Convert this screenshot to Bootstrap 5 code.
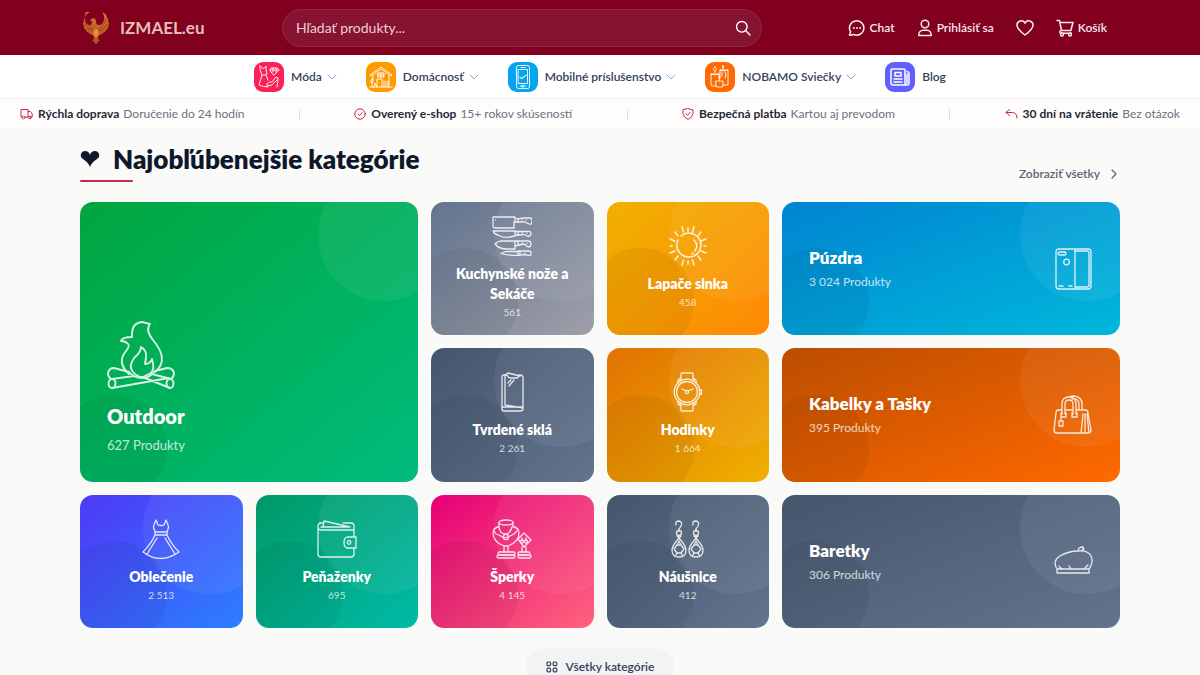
<!DOCTYPE html>
<html lang="sk">
<head>
<meta charset="utf-8">
<meta name="viewport" content="width=device-width, initial-scale=1">
<title>IZMAEL.eu</title>
<link href="https://cdn.jsdelivr.net/npm/bootstrap@5.3.0/dist/css/bootstrap.min.css" rel="stylesheet">
<style>
  body { font-family: Lato, "Liberation Sans", sans-serif; background: #fafaf9; color: #0f172a; font-size: 12px; }
  a { text-decoration: none; color: inherit; }
  svg { flex-shrink: 0; fill: none; stroke: currentColor; stroke-linecap: round; stroke-linejoin: round; }
  .shell { max-width: 1040px; margin-inline: auto; }

  .topbar { background: #80001e; color: #f8e9ed; min-height: 55px; }
  .brand { flex: 0 0 202px; padding-left: 2px; gap: 10px; font-size: 17px; font-weight: 700; color: #e6bfb3; }
  .brand svg { stroke: none; }
  .search-box { flex: 0 1 480px; height: 38px; border: 1px solid #94293f; border-radius: 19px; background: #861331; padding: 0 10px 0 13px; }
  .search-box input { background: none; border: 0; outline: 0; color: #f5dfe5; font-size: 14px; min-width: 0; padding: 0; }
  .search-box input::placeholder { color: #eccfd7; opacity: 1; }
  .search-box button { background: none; border: 0; padding: 0; color: #fff; display: flex; }
  .actions { gap: 22px; padding-right: 13px; font-weight: 600; }
  .actions a { gap: 4px; }

  .menu { background: #fff; border-bottom: 1px solid #eceef1; min-height: 44px; gap: 29px; color: #334155; font-weight: 600; }
  .menu a { gap: 7px; }
  .tile { width: 30px; height: 30px; border-radius: 9px; color: #fff; }
  .chev { color: #94a3b8; margin-left: -2px; }

  .trust { background: #fffdfb; border-bottom: 1px solid #f3f3f3; min-height: 31px; padding: 0 20px; color: #6b7280; }
  .trust b { color: #1f2937; margin-left: 1px; }
  .trust svg { color: #c62a4c; }
  .rule { width: 1px; height: 11px; background: #dcdee2; }

  .title-row { padding-top: 13px; }
  .title-row h2 { font-size: 26px; line-height: 32px; font-weight: 800; padding-bottom: 7px; margin: 0 0 20px; position: relative; gap: 13px; }
  .title-row h2::after { content: ""; position: absolute; left: 0; bottom: 0; width: 53px; height: 2px; border-radius: 1px; background: #c62a4c; }
  .all-link { color: #5b6472; font-weight: 600; gap: 8px; padding-top: 3px; }

  .tiles { display: grid; grid-template-columns: repeat(6, 1fr); grid-auto-rows: 1fr; gap: 13px; min-height: 426px; }
  .cat { position: relative; overflow: hidden; border-radius: 13px; color: #fff; display: flex; flex-direction: column; align-items: center; justify-content: center; text-align: center; padding: 13px; background: linear-gradient(to bottom right, var(--from), var(--to)); }
  .cat::before, .cat::after { content: ""; position: absolute; border-radius: 50%; }
  .cat::before { width: 133px; height: 133px; top: -34px; right: -33px; background: #fff; opacity: .06; }
  .cat::after { width: 107px; height: 107px; left: -20px; bottom: -20px; background: #000; opacity: .05; }
  .cat > * { position: relative; z-index: 1; }
  .cat svg { opacity: .85; stroke-width: 1.3; }
  .cat strong { font-size: 14px; line-height: 20px; font-weight: 800; margin-top: 8px; }
  .cat small { font-size: 10px; line-height: 17px; opacity: .75; }
  .cat-wide { grid-column: span 2; flex-direction: row; justify-content: space-between; text-align: left; padding: 0 27px; }
  .cat-wide strong { display: block; font-size: 17px; line-height: 24px; margin: 0 0 3px; }
  .cat-wide small { display: block; font-size: 12px; line-height: 18px; }
  .cat-big { grid-area: span 2 / span 2; align-items: flex-start; justify-content: flex-end; text-align: left; padding: 27px; }
  .cat-big strong { font-size: 20px; line-height: 28px; margin: 13px 0 6px; }
  .cat-big small { font-size: 13px; line-height: 19px; }
  .more { background: #f1f3f5; color: #334155; border: 0; border-radius: 19px; height: 37px; padding: 0 20px; gap: 8px; font-size: 12px; font-weight: 600; margin: 20px 0 27px; }

  @media (max-width: 991px) {
    .topbar .shell, .menu, .trust { flex-wrap: wrap; }
    .tiles { grid-template-columns: repeat(2, 1fr); grid-auto-rows: minmax(133px, auto); }
    .shell { padding-inline: 12px; }
  }
</style>
</head>
<body>
<header class="topbar d-flex align-items-center">
  <div class="shell w-100 d-flex align-items-center">
    <a class="brand d-flex align-items-center" href="#">
      <svg width="28" height="34" viewBox="0 0 28 34">
        <defs><linearGradient id="flame" x1="0" y1="0" x2="0" y2="1"><stop offset="0" stop-color="#d9772f"/><stop offset="1" stop-color="#b04a20"/></linearGradient></defs>
        <path fill="url(#flame)" d="M8 1Q3 3 3 7 1 8 2 11 0 12 2 15q-1 2 2 4 0 2 3 3 1 2 4 2l1 3-2 3 2 0 0 2 2 1 2-1 0-2 2 0-2-3 1-3q3 0 4-2 3-1 3-3 3-2 2-4 2-3 0-4 1-3-1-4 0-4-5-6 3 4 2 8-1 5-5 5-3 0-3-3l0-2-2-2-3 1-1 2 2 0q0 4-2 4-5 0-5-5-1-4 1-8z"/>
        <path d="M4 8q1 6 7 10M3 13q2 5 8 7M24 8q-1 6-7 10M25 13q-2 5-8 7M14 18v8" style="stroke:#8b2f16;stroke-width:.7"/>
        <path fill="#e28a3e" d="M12 19q2-2 4 0l1 4-3 4-3-4z"/>
      </svg>
      IZMAEL.eu
    </a>
    <form class="search-box d-flex align-items-center" role="search">
      <input class="flex-grow-1" type="search" placeholder="Hľadať produkty..." aria-label="Hľadať produkty">
      <button type="button" aria-label="Hľadať"><svg width="16" height="16" viewBox="0 0 16 16" stroke-width="1.4"><circle cx="6.8" cy="6.8" r="5.3"/><path d="M10.8 10.8 15 15"/></svg></button>
    </form>
    <nav class="actions ms-auto d-flex align-items-center">
      <a class="d-flex align-items-center" href="#"><svg width="18" height="18" viewBox="0 0 18 18" stroke-width="1.5"><path d="M1.5 16.2 2.6 12.8A7.2 7.2 0 1 1 5.5 15.4Q3.6 16.5 1.5 16.2z"/><path d="M5.9 9h.1M9 9h.1M12.1 9h.1" stroke-width="1.8"/></svg>Chat</a>
      <a class="d-flex align-items-center" href="#"><svg width="16" height="18" viewBox="0 0 16 18" stroke-width="1.5"><circle cx="8" cy="5" r="3.8"/><path d="M1.7 16.5c0-3.5 2.2-5.3 4.3-5.3h4c2.100 0 4.300 1.800 4.300 5.300z"/></svg>Prihlásiť sa</a>
      <a class="d-flex" href="#" aria-label="Obľúbené"><svg width="18" height="16" viewBox="0 0 18 16" stroke-width="1.5"><path d="M9 15C5 12 1 9 1 5.200A4.200 4.200 0 0 1 9 3.200 4.200 4.200 0 0 1 17 5.200C17 9 13 12 9 15z"/></svg></a>
      <a class="d-flex align-items-center" href="#"><svg width="18" height="18" viewBox="0 0 18 18" stroke-width="1.5"><path d="M1 1.500h2.500L5.500 11.500h9.300L17 3.500H4M5.500 11.500c-2 0-2.500 2.800-.2 2.800h10"/><circle cx="6" cy="15.500" r="1.500"/><circle cx="14" cy="15.500" r="1.500"/></svg>Košík</a>
    </nav>
  </div>
</header>

<nav class="menu d-flex align-items-center justify-content-center">
  <a class="d-flex align-items-center" href="#"><span class="tile d-flex align-items-center justify-content-center" style="background:#fb2157"><svg width="22" height="24" viewBox="0 0 22 24" stroke-width=".9"><path d="M2 1v4l2 5-3 10q4 2 9 2M2 1q3 5 6 0v4l1 4-2 1H4M8 10l2 5M12 5l1-2h6l2 2-5 5zM12 5h9M15 3v4M18 3v4M9 19q2-3 5-2l4-5q3 0 2 3l-1 7M19 15l-5 5-5 1v-2"/></svg></span>Móda <svg class="chev" width="10" height="6" viewBox="0 0 10 6"><path d="m1 1 4 4 4-4"/></svg></a>
  <a class="d-flex align-items-center" href="#"><span class="tile d-flex align-items-center justify-content-center" style="background:#fe9a00"><svg width="24" height="24" viewBox="0 0 24 24" stroke-width=".9"><path d="M1 10 12 2l11 8-1 1-10-7L2 11zM4 10v5M20 10v12M9 8h6v4H9zM12 8v4M9 10h6M3 14q2 3 0 4-3-1 0-4zM3 16v6M1 22h22M8 22v-8h5v8M15 22v-6M17 22v-6M19 22v-6M5 22l1-4 2 4"/></svg></span>Domácnosť <svg class="chev" width="10" height="6" viewBox="0 0 10 6"><path d="m1 1 4 4 4-4"/></svg></a>
  <a class="d-flex align-items-center" href="#"><span class="tile d-flex align-items-center justify-content-center" style="background:#05a4ee"><svg width="16" height="24" viewBox="0 0 16 24" stroke-width=".9"><rect x="1.500" y=".5" width="13" height="23" rx="2"/><path d="M3.500 4.500h9v14h-9zM6 2.500h4M5 21h1M10 21h1M7 20.500h2v1.500H7zM4.500 12l2 2 5-4M6.500 12l1 1 3-2.500"/></svg></span>Mobilné príslušenstvo <svg class="chev" width="10" height="6" viewBox="0 0 10 6"><path d="m1 1 4 4 4-4"/></svg></a>
  <a class="d-flex align-items-center" href="#"><span class="tile d-flex align-items-center justify-content-center" style="background:#ff6900"><svg width="22" height="24" viewBox="0 0 22 24" stroke-width=".9"><path d="M7 21H3q-1 0-1-1V9h8v4M2 9q4 2 8 0M6 8V6M6 2q-3 3 0 4 3-1 0-4zM11 12V5h8v15h-5M11 5q4 2 8 0M14 4V3M14 .5q-2 2 0 2.500 2-.5 0-2.500zM7 16h7v5q0 1-1 1H8q-1 0-1-1zM10.500 16v-2M10.500 11q-2 2 0 3 2-1 0-3zM13 7v4M16 7l1 3-1 3"/></svg></span>NOBAMO Sviečky <svg class="chev" width="10" height="6" viewBox="0 0 10 6"><path d="m1 1 4 4 4-4"/></svg></a>
  <a class="d-flex align-items-center" href="#"><span class="tile d-flex align-items-center justify-content-center" style="background:#615fff"><svg width="20" height="18" viewBox="0 0 20 18" stroke-width="1.500"><path d="M15 17H3q-2 0-2-2V2q0-1 1-1h12q1 0 1 1v13q0 2 2 2t2-2V5q0-1-2-1.500M15 17h2"/><path d="M5 4.500h6V8H5zM4 11h8M4 14h8M17 6v9"/></svg></span>Blog</a>
</nav>

<div class="trust d-flex align-items-center justify-content-between">
  <span class="d-flex align-items-center gap-1"><svg width="13" height="12" viewBox="0 0 13 12"><path d="M2 9H1V1.500h7V9H5M8 3.500h2.500L12.200 6v3h-1M8 9h1"/><circle cx="3.500" cy="9.500" r="1.300"/><circle cx="10" cy="9.500" r="1.300"/></svg><b>Rýchla doprava</b> Doručenie do 24 hodín</span>
  <i class="rule"></i>
  <span class="d-flex align-items-center gap-1"><svg width="12" height="12" viewBox="0 0 12 12"><circle cx="6" cy="6" r="5.200"/><path d="m4 6 1.500 1.500L8.200 4.600"/></svg><b>Overený e-shop</b> 15+ rokov skúseností</span>
  <i class="rule"></i>
  <span class="d-flex align-items-center gap-1"><svg width="12" height="12" viewBox="0 0 12 12"><path d="M6 .6 11 2v3.500Q10.500 9.500 6 11.400 1.500 9.500 1 5.500V2z"/><path d="m4 5.800 1.500 1.500L8.200 4.400"/></svg><b>Bezpečná platba</b> Kartou aj prevodom</span>
  <i class="rule"></i>
  <span class="d-flex align-items-center gap-1"><svg width="13" height="12" viewBox="0 0 13 12"><path d="M4.500 1.500 1 4.500l3.500 3M1 4.500h6.500Q12 5 12 10"/></svg><b>30 dní na vrátenie</b> Bez otázok</span>
</div>

<main class="shell">
  <div class="title-row d-flex justify-content-between align-items-center">
    <h2 class="d-flex align-items-center"><svg width="20" height="16" viewBox="0 0 20 16"><path fill="currentColor" stroke="none" d="M10 16Q8 11 3 8 0 6 1 3 2 0 5 0q4 0 5 4Q11 0 15 0q3 0 4 3 1 3-2 5-5 3-7 8z"/></svg>Najobľúbenejšie kategórie</h2>
    <a class="all-link d-flex align-items-center" href="#">Zobraziť všetky <svg width="12" height="10" viewBox="0 0 12 10" stroke-width="1.200"><path d="m4 1 4 4-4 4"/></svg></a>
  </div>

  <div class="tiles">
    <a class="cat cat-big" href="#" style="--from:#00a63e;--to:#00bc7d">
      <svg width="68" height="68" viewBox="0 0 68 68" style="stroke-width:1.900"><path d="M22 53C12 44 14 36 19 30q5-6 1-8-2-2-6-2 1-4 11-4Q24 2 35 1l8 2q-5 6 3 16c11 13 12 24 2 32"/><path d="M31 55c-9-5-9-12-3-19q6-5 6-10 6 3 5 11l-1 6q5 0 7-5 3 10-1 14l-8 4q-3 0-5-1z"/><path d="M22 51 7 47Q2 47 1 52q0 4 3 6M48 50l12-3q6 0 7 5 0 4-3 6M27 55 5 58M5 67l57-10M38 57l25 10M22 51q5 6 13 6 8 0 13-7M45 53l19 5"/><ellipse cx="5" cy="62.500" rx="3.500" ry="4.500"/><ellipse cx="63" cy="62.500" rx="3.500" ry="4.500"/></svg>
      <strong>Outdoor</strong><small>627 Produkty</small>
    </a>
    <a class="cat" href="#" style="--from:#62748e;--to:#9f9fa9">
      <svg width="40" height="40" viewBox="0 0 40 40"><path d="M1 1h22v5h-1v6H3q-2 0-2-2zM23 2l3 1q3-1 7-1h5q2 0 2 3 0 4-3 3l-4-2-10 0M26 2.500v4M3.500 4h.1M30 4h.1M34 4h.1M1 15h22v5q-11 3-17-1-4-1-5-4zM23 15.500h13q3-.5 3 2t-3 3l-4-2-9 1M26 16v3M30 17h.1M35 17.500h.1M23 25H8q-3 1-5 3 4 5 12 5h8zM23 25h13q3 0 3 3t-3 3l-4-3-9 2M26 25v4M30 27h.1M35 27.500h.1M26 35.500H14l-5 2q6 2 17 2zM26 35h11q2 0 2 2.500T37 39.500l-5-1-6 1M28 35v3M33 37h.1"/></svg>
      <strong>Kuchynské nože a Sekáče</strong><small>561</small>
    </a>
    <a class="cat" href="#" style="--from:#f0b100;--to:#ff8904">
      <svg width="40" height="40" viewBox="0 0 40 40"><path d="M13 10A12 12 0 1 1 10 14M26 14q5 5 1 11M25 27l-1 1M20 2v3M26 1l-1.500 5M14 1l1.500 5M33 6l-3 4M7 6l3 4M38 13l-5 2M2 13l5 2M36 20h2M2 20h2M38 27l-5-2M2 27l5-2M33 34l-3-4M7 34l3-4M26 39l-1.500-5M14 39l1.500-5M20 35v3" style="stroke-width:1.500"/></svg>
      <strong>Lapače slnka</strong><small>458</small>
    </a>
    <a class="cat cat-wide" href="#" style="--from:#0084d1;--to:#00b8db">
      <span><strong>Púzdra</strong><small>3 024 Produkty</small></span>
      <svg width="40" height="42" viewBox="0 0 40 42"><path d="M22 1H6Q3 1 3 4v34q0 3 3 3h16zM22 1h13q3 0 3 3v34q0 3-3 3H22M22 3h11q3 0 3 2v32q0 2-3 2H22M6 38h4M16 38h3"/><rect x="5" y="4" width="8" height="3" rx="1.500"/><circle cx="13.500" cy="14" r="2.800"/></svg>
    </a>
    <a class="cat" href="#" style="--from:#45556c;--to:#62748e">
      <svg width="40" height="40" viewBox="0 0 40 40"><path d="M13 3h-1q-2 0-2 2v32q0 2 2 2h16q3 0 3-2V6q0-3-3-3h-1M10 35h20M13 3h2q1 3 4 3h5q3 0 3-3M13 3v30M13 3l3-2 12 3M13 33l18 3M16 11l3-3M17 14l5-6"/></svg>
      <strong>Tvrdené sklá</strong><small>2 261</small>
    </a>
    <a class="cat" href="#" style="--from:#e17100;--to:#f0b100">
      <svg width="40" height="40" viewBox="0 0 40 40"><circle cx="19" cy="20" r="12.800"/><circle cx="19" cy="20" r="10.500"/><circle cx="19" cy="20" r="1.600"/><path d="M18 19l-4-2M20 19l5-2M12 9l1-3V2q0-1 1-1h10q1 0 1 1v4l1 3M12 31l1 3v4q0 1 1 1h10q1 0 1-1v-4l1-3M13 6l-3 2v3M25 6l3 2v3M13 34l-3-2v-3M25 34l3-2v-3M31.500 18h2v4h-2"/></svg>
      <strong>Hodinky</strong><small>1 664</small>
    </a>
    <a class="cat cat-wide" href="#" style="--from:#bb4d00;--to:#ff6900">
      <span><strong>Kabelky a Tašky</strong><small>395 Produkty</small></span>
      <svg width="40" height="40" viewBox="0 0 40 40"><path d="M9 15H5Q3 15 3 18L1 35q0 3 3 3h31q3 0 3-3l-3-17q0-3-3-3h-4M12 15h8M23 15h4M9 19V9q0-7 7-7t7 7v10M12 19V9q0-4 4-4t4 4v10M16 2q2-1 5-1 8 1 8 8v6M19 4q7-1 7 5v6M8 18v4h5v-4M19 18v4h5v-4M30 19l-2 19M32 19v19M34 19l2 19M8 22v4M6 26h4v5H6z"/></svg>
    </a>
    <a class="cat" href="#" style="--from:#4f39f6;--to:#2b7fff">
      <svg width="40" height="40" viewBox="0 0 40 40"><path d="M15 1l-2 5q-1 2 0 4l1 3h12l1-3q1-2 0-4l-2-5-2 5q-3 1-6 0zM14 13v3h12v-3M14 16Q10 25 2 33q17 13 36 0-8-8-12-17M6 35l10-16M34 35 24 19"/></svg>
      <strong>Oblečenie</strong><small>2 513</small>
    </a>
    <a class="cat" href="#" style="--from:#009966;--to:#00bba7">
      <svg width="40" height="40" viewBox="0 0 40 40"><path d="M7 4H4Q1 4 1 7v28q0 3 3 3h30q3 0 3-3v-6M37 18V7q0-3-3-3H26M1 8q0 3 3 3h33M4 8h27M6 8l1-6 26 6M30 18h9v11h-9q-3-1-3-5.500t3-5.500z"/><circle cx="32" cy="23.500" r="1.800"/></svg>
      <strong>Peňaženky</strong><small>695</small>
    </a>
    <a class="cat" href="#" style="--from:#e60076;--to:#ff637e">
      <svg width="40" height="40" viewBox="0 0 40 40"><ellipse cx="14" cy="3.500" rx="7" ry="2.500"/><path d="M7 3.500v4Q1 9 1 14q0 9 11 13h4q11-4 11-13 0-5-6-6.500v-4M7 8q1 7 6 7t7-7M2 12l2 3 3 1 5 3 6-2 4-2 3-3M12 27v6M16 27v6M26 20l6-6 7 7-7 7zM30 28v5M34 28v5M30 19v2M34 19v2"/><circle cx="14" cy="18" r="2.600"/><circle cx="30" cy="22.500" r="1.500"/><circle cx="34" cy="22.500" r="1.500"/><rect x="6" y="33" width="17" height="3" rx="1.500"/><rect x="5" y="36" width="18" height="3" rx="1.500"/><rect x="26" y="33" width="12" height="3" rx="1.500"/><rect x="26" y="36" width="13" height="3" rx="1.500"/></svg>
      <strong>Šperky</strong><small>4 145</small>
    </a>
    <a class="cat" href="#" style="--from:#45556c;--to:#62748e">
      <svg width="40" height="40" viewBox="0 0 40 40"><g id="drop"><path d="M8 6Q7 2 11 2q4 1 2 5l-2 3"/><circle cx="11" cy="14" r="2.500"/><path d="M11 10v2M9 17h4l-2 2zM11 19q-7 8-7 12 0 7 7 7t7-7q0-4-7-12zM9 26h4l3 4-3 4H9l-3-4zM9 26l2-4 2 4M9 34l-1 2M13 34l1 2"/></g><use href="#drop" x="17"/></svg>
      <strong>Náušnice</strong><small>412</small>
    </a>
    <a class="cat cat-wide" href="#" style="--from:#45556c;--to:#62748e">
      <span><strong>Baretky</strong><small>306 Produkty</small></span>
      <svg width="40" height="40" viewBox="0 0 40 40"><path d="M4 28Q-1 20 7 15q9-5 18-5 10-1 13 5 3 7-2 13zM4 28v4h32v-4M25 10q0-4 5-4l1 2q-2 0-2 2M6 25q2 3 5 3M16 25l2 3M35 24l-4 4"/></svg>
    </a>
  </div>
  <div class="d-flex justify-content-center">
    <button class="more d-flex align-items-center" type="button"><svg width="12" height="12" viewBox="0 0 12 12" stroke-width="1.200"><rect x="1" y="1" width="3.600" height="3.600" rx="1"/><rect x="7.200" y="1" width="3.600" height="3.600" rx="1"/><rect x="1" y="7.200" width="3.600" height="3.600" rx="1"/><rect x="7.200" y="7.200" width="3.600" height="3.600" rx="1"/></svg>Všetky kategórie</button>
  </div>
</main>
<script src="https://cdn.jsdelivr.net/npm/bootstrap@5.3.0/dist/js/bootstrap.bundle.min.js"></script>
</body>
</html>
